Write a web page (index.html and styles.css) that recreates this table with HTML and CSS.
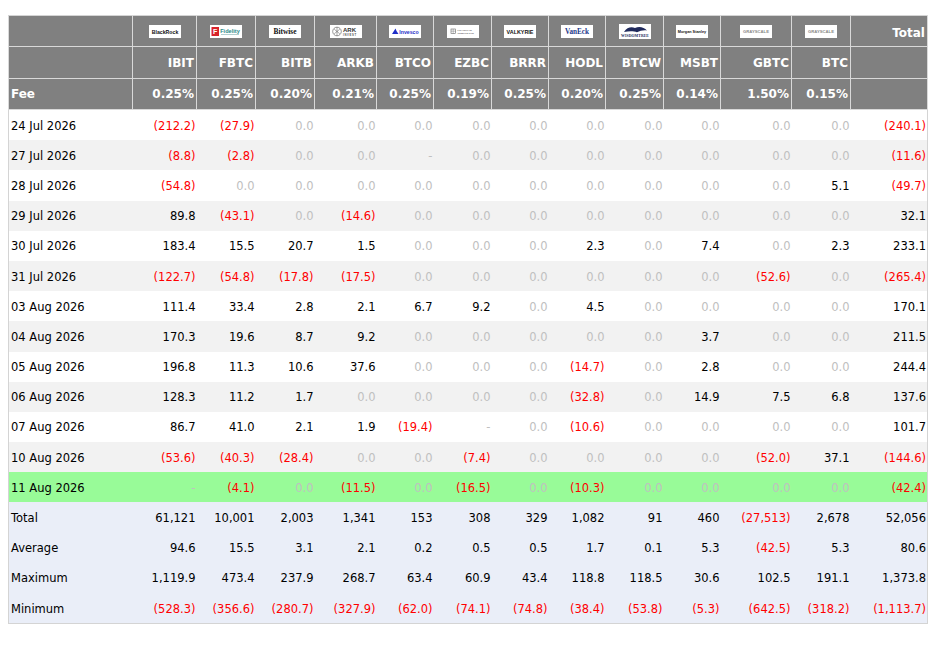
FILE: index.html
```html
<!DOCTYPE html>
<html lang="en">
<head>
<meta charset="utf-8">
<title>Bitcoin ETF Flows</title>
<link rel="stylesheet" href="styles.css">
</head>
<body>
<table class="flows">
  <colgroup>
    <col class="c-date"><col class="c64"><col class="c59"><col class="c59"><col class="c62"><col class="c57"><col class="c58"><col class="c57"><col class="c57"><col class="c58"><col class="c57"><col class="c71"><col class="c59"><col class="c77">
  </colgroup>
  <thead>
    <tr class="logos">
      <th></th>
      <th><svg class="logo" viewBox="0 0 32 13"><rect width="32" height="13" fill="#fff"/><text x="16" y="8.6" text-anchor="middle" class="lt blk" font-size="5.2" font-weight="700">BlackRock</text></svg></th>
      <th><svg class="logo" viewBox="0 0 32 13"><rect width="32" height="13" fill="#fff"/><rect x="1.5" y="2" width="7.5" height="9" fill="#d8232a"/><text x="5.2" y="9.3" text-anchor="middle" class="lt" fill="#fff" font-size="7" font-weight="700">F</text><text x="20" y="7.6" text-anchor="middle" class="lt" fill="#2e8a8a" font-size="5.6" font-weight="700">Fidelity</text><rect x="11" y="9.2" width="18" height="0.6" fill="#7fb0b0"/></svg></th>
      <th><svg class="logo" viewBox="0 0 32 13"><rect width="32" height="13" fill="#fff"/><text x="16" y="9.2" text-anchor="middle" class="st" fill="#111" font-size="7.4">Bitwise</text></svg></th>
      <th><svg class="logo" viewBox="0 0 32 13"><rect width="32" height="13" fill="#fff"/><circle cx="7" cy="6.5" r="4.3" fill="none" stroke="#555" stroke-width="0.6"/><path d="M4.2 4.2 L9.8 8.8 M9.8 4.2 L4.2 8.8 M7 2.2 V10.8" stroke="#555" stroke-width="0.5"/><text x="13" y="7" class="lt" fill="#333" font-size="6">ARK</text><text x="13" y="11" class="lt" fill="#555" font-size="2.8" letter-spacing="0.6">INVEST</text></svg></th>
      <th><svg class="logo" viewBox="0 0 32 13"><rect width="32" height="13" fill="#fff"/><path d="M3 9 L6.5 3.5 L7.5 6 L9.5 9 Z" fill="#1f2ec8"/><text x="20" y="8.7" text-anchor="middle" class="lt" fill="#1f2ec8" font-size="5.2" font-weight="700">Invesco</text></svg></th>
      <th><svg class="logo" viewBox="0 0 32 13"><rect width="32" height="13" fill="#fff"/><rect x="4" y="4" width="4.5" height="4.5" fill="none" stroke="#666" stroke-width="0.6"/><path d="M4 6.2 H8.5 M6.2 4 V8.5" stroke="#666" stroke-width="0.4"/><text x="10.5" y="6" class="lt" fill="#666" font-size="2.4" letter-spacing="0.3">FRANKLIN</text><text x="10.5" y="9" class="lt" fill="#666" font-size="2.4" letter-spacing="0.2">TEMPLETON</text></svg></th>
      <th><svg class="logo" viewBox="0 0 32 13"><rect width="32" height="13" fill="#fff"/><text x="16" y="8.8" text-anchor="middle" class="lt blk" font-size="5.4" font-weight="700">VALKYRIE</text></svg></th>
      <th><svg class="logo" viewBox="0 0 32 13"><rect width="32" height="13" fill="#fff"/><text x="16" y="9.2" text-anchor="middle" class="st" fill="#1d3a8c" font-size="7.2" font-weight="700">VanEck</text></svg></th>
      <th><svg class="logo tall" viewBox="0 0 32 15"><rect width="32" height="15" fill="#fff"/><path d="M5 8 C8 3.5 12 2.5 16 4 C20 2 25 3 28 6.5 C24 6 21 7 18 8.3 C15 7 10 7 5 8 Z" fill="#202a5c"/><text x="16" y="13.4" text-anchor="middle" class="st" fill="#202a5c" font-size="3.8" letter-spacing="0.1">WISDOMTREE</text></svg></th>
      <th><svg class="logo" viewBox="0 0 32 13"><rect width="32" height="13" fill="#fff"/><text x="16" y="7.8" text-anchor="middle" class="lt blk" font-size="3.8">Morgan Stanley</text></svg></th>
      <th><svg class="logo" viewBox="0 0 32 13"><rect width="32" height="13" fill="#fff"/><text x="16" y="8" text-anchor="middle" class="lt" fill="#8a8a8a" font-size="4.2">GRAYSCALE</text></svg></th>
      <th><svg class="logo" viewBox="0 0 32 13"><rect width="32" height="13" fill="#fff"/><text x="16" y="8" text-anchor="middle" class="lt" fill="#8a8a8a" font-size="4.2">GRAYSCALE</text></svg></th>
      <th class="total-head">Total</th>
    </tr>
    <tr class="tickers">
      <th></th><th>IBIT</th><th>FBTC</th><th>BITB</th><th>ARKB</th><th>BTCO</th><th>EZBC</th><th>BRRR</th><th>HODL</th><th>BTCW</th><th>MSBT</th><th>GBTC</th><th>BTC</th><th></th>
    </tr>
    <tr class="fees">
      <th class="lbl">Fee</th><th>0.25%</th><th>0.25%</th><th>0.20%</th><th>0.21%</th><th>0.25%</th><th>0.19%</th><th>0.25%</th><th>0.20%</th><th>0.25%</th><th>0.14%</th><th>1.50%</th><th>0.15%</th><th></th>
    </tr>
  </thead>
  <tbody>
    <tr><td class="lbl">24 Jul 2026</td><td class="n">(212.2)</td><td class="n">(27.9)</td><td class="z">0.0</td><td class="z">0.0</td><td class="z">0.0</td><td class="z">0.0</td><td class="z">0.0</td><td class="z">0.0</td><td class="z">0.0</td><td class="z">0.0</td><td class="z">0.0</td><td class="z">0.0</td><td class="n">(240.1)</td></tr>
    <tr><td class="lbl">27 Jul 2026</td><td class="n">(8.8)</td><td class="n">(2.8)</td><td class="z">0.0</td><td class="z">0.0</td><td class="z">-</td><td class="z">0.0</td><td class="z">0.0</td><td class="z">0.0</td><td class="z">0.0</td><td class="z">0.0</td><td class="z">0.0</td><td class="z">0.0</td><td class="n">(11.6)</td></tr>
    <tr><td class="lbl">28 Jul 2026</td><td class="n">(54.8)</td><td class="z">0.0</td><td class="z">0.0</td><td class="z">0.0</td><td class="z">0.0</td><td class="z">0.0</td><td class="z">0.0</td><td class="z">0.0</td><td class="z">0.0</td><td class="z">0.0</td><td class="z">0.0</td><td>5.1</td><td class="n">(49.7)</td></tr>
    <tr><td class="lbl">29 Jul 2026</td><td>89.8</td><td class="n">(43.1)</td><td class="z">0.0</td><td class="n">(14.6)</td><td class="z">0.0</td><td class="z">0.0</td><td class="z">0.0</td><td class="z">0.0</td><td class="z">0.0</td><td class="z">0.0</td><td class="z">0.0</td><td class="z">0.0</td><td>32.1</td></tr>
    <tr><td class="lbl">30 Jul 2026</td><td>183.4</td><td>15.5</td><td>20.7</td><td>1.5</td><td class="z">0.0</td><td class="z">0.0</td><td class="z">0.0</td><td>2.3</td><td class="z">0.0</td><td>7.4</td><td class="z">0.0</td><td>2.3</td><td>233.1</td></tr>
    <tr><td class="lbl">31 Jul 2026</td><td class="n">(122.7)</td><td class="n">(54.8)</td><td class="n">(17.8)</td><td class="n">(17.5)</td><td class="z">0.0</td><td class="z">0.0</td><td class="z">0.0</td><td class="z">0.0</td><td class="z">0.0</td><td class="z">0.0</td><td class="n">(52.6)</td><td class="z">0.0</td><td class="n">(265.4)</td></tr>
    <tr><td class="lbl">03 Aug 2026</td><td>111.4</td><td>33.4</td><td>2.8</td><td>2.1</td><td>6.7</td><td>9.2</td><td class="z">0.0</td><td>4.5</td><td class="z">0.0</td><td class="z">0.0</td><td class="z">0.0</td><td class="z">0.0</td><td>170.1</td></tr>
    <tr><td class="lbl">04 Aug 2026</td><td>170.3</td><td>19.6</td><td>8.7</td><td>9.2</td><td class="z">0.0</td><td class="z">0.0</td><td class="z">0.0</td><td class="z">0.0</td><td class="z">0.0</td><td>3.7</td><td class="z">0.0</td><td class="z">0.0</td><td>211.5</td></tr>
    <tr><td class="lbl">05 Aug 2026</td><td>196.8</td><td>11.3</td><td>10.6</td><td>37.6</td><td class="z">0.0</td><td class="z">0.0</td><td class="z">0.0</td><td class="n">(14.7)</td><td class="z">0.0</td><td>2.8</td><td class="z">0.0</td><td class="z">0.0</td><td>244.4</td></tr>
    <tr><td class="lbl">06 Aug 2026</td><td>128.3</td><td>11.2</td><td>1.7</td><td class="z">0.0</td><td class="z">0.0</td><td class="z">0.0</td><td class="z">0.0</td><td class="n">(32.8)</td><td class="z">0.0</td><td>14.9</td><td>7.5</td><td>6.8</td><td>137.6</td></tr>
    <tr><td class="lbl">07 Aug 2026</td><td>86.7</td><td>41.0</td><td>2.1</td><td>1.9</td><td class="n">(19.4)</td><td class="z">-</td><td class="z">0.0</td><td class="n">(10.6)</td><td class="z">0.0</td><td class="z">0.0</td><td class="z">0.0</td><td class="z">0.0</td><td>101.7</td></tr>
    <tr><td class="lbl">10 Aug 2026</td><td class="n">(53.6)</td><td class="n">(40.3)</td><td class="n">(28.4)</td><td class="z">0.0</td><td class="z">0.0</td><td class="n">(7.4)</td><td class="z">0.0</td><td class="z">0.0</td><td class="z">0.0</td><td class="z">0.0</td><td class="n">(52.0)</td><td>37.1</td><td class="n">(144.6)</td></tr>
    <tr class="today"><td class="lbl">11 Aug 2026</td><td class="z">-</td><td class="n">(4.1)</td><td class="z">0.0</td><td class="n">(11.5)</td><td class="z">0.0</td><td class="n">(16.5)</td><td class="z">0.0</td><td class="n">(10.3)</td><td class="z">0.0</td><td class="z">0.0</td><td class="z">0.0</td><td class="z">0.0</td><td class="n">(42.4)</td></tr>
    <tr class="stat"><td class="lbl">Total</td><td>61,121</td><td>10,001</td><td>2,003</td><td>1,341</td><td>153</td><td>308</td><td>329</td><td>1,082</td><td>91</td><td>460</td><td class="n">(27,513)</td><td>2,678</td><td>52,056</td></tr>
    <tr class="stat"><td class="lbl">Average</td><td>94.6</td><td>15.5</td><td>3.1</td><td>2.1</td><td>0.2</td><td>0.5</td><td>0.5</td><td>1.7</td><td>0.1</td><td>5.3</td><td class="n">(42.5)</td><td>5.3</td><td>80.6</td></tr>
    <tr class="stat"><td class="lbl">Maximum</td><td>1,119.9</td><td>473.4</td><td>237.9</td><td>268.7</td><td>63.4</td><td>60.9</td><td>43.4</td><td>118.8</td><td>118.5</td><td>30.6</td><td>102.5</td><td>191.1</td><td>1,373.8</td></tr>
    <tr class="stat"><td class="lbl">Minimum</td><td class="n">(528.3)</td><td class="n">(356.6)</td><td class="n">(280.7)</td><td class="n">(327.9)</td><td class="n">(62.0)</td><td class="n">(74.1)</td><td class="n">(74.8)</td><td class="n">(38.4)</td><td class="n">(53.8)</td><td class="n">(5.3)</td><td class="n">(642.5)</td><td class="n">(318.2)</td><td class="n">(1,113.7)</td></tr>
  </tbody>
</table>
</body>
</html>
```

FILE: styles.css
```css
html, body {
  background: #ffffff;
}

body {
  margin: 15px 8px 8px 8px;
  font-family: "DejaVu Sans", Verdana, sans-serif;
  font-size: 11.5px;
  color: #000;
}

.flows {
  border-collapse: collapse;
  table-layout: fixed;
  width: 920px;
  border: 1px solid #d4d4d4;
}

.c-date { width: 124px; }
.c57 { width: 57px; }
.c58 { width: 58px; }
.c59 { width: 59px; }
.c62 { width: 62px; }
.c64 { width: 64px; }
.c71 { width: 71px; }
.c77 { width: 77px; }

.flows th {
  background: #808080;
  color: #ffffff;
  font-weight: 700;
  text-align: right;
  padding: 0 2px 0 2px;
  border: 1px solid #d9d9d9;
  white-space: nowrap;
  overflow: hidden;
}

.flows thead tr:first-child th {
  border-top: 1px solid #d4d4d4;
}

.flows .logos th {
  height: 29px;
  text-align: center;
  vertical-align: middle;
  padding: 1px 0 0 0;
}

.flows .logos th.total-head {
  height: 27px;
  text-align: right;
  padding: 3px 2px 0 0;
  font-size: 12px;
}

.logo {
  display: block;
  width: 32px;
  height: 13px;
  margin: 0 auto;
}

.logo.tall {
  height: 15px;
}

.lt {
  font-family: "Liberation Sans", Arial, sans-serif;
}

.st {
  font-family: "Liberation Serif", "Times New Roman", serif;
}

.blk {
  fill: #111;
}

.flows .tickers th {
  height: 31px;
  font-size: 12px;
}

.flows .fees th {
  height: 30px;
  font-size: 12px;
}

.flows th.lbl {
  text-align: left;
}

.flows td {
  height: 29.2px;
  padding: 1px 1px 0 2px;
  text-align: right;
  white-space: nowrap;
  vertical-align: middle;
  line-height: 14px;
}

.flows td.lbl {
  text-align: left;
  padding-left: 2px;
}

.flows tbody tr:nth-child(even) td {
  background: #f2f2f2;
}

.flows tbody tr.today td {
  background: #98fb98;
}

.flows tbody tr.stat td {
  background: #eaeef8;
}

.flows td.n {
  color: #ff0000;
}

.flows td.z {
  color: #c0c0c0;
}
```
